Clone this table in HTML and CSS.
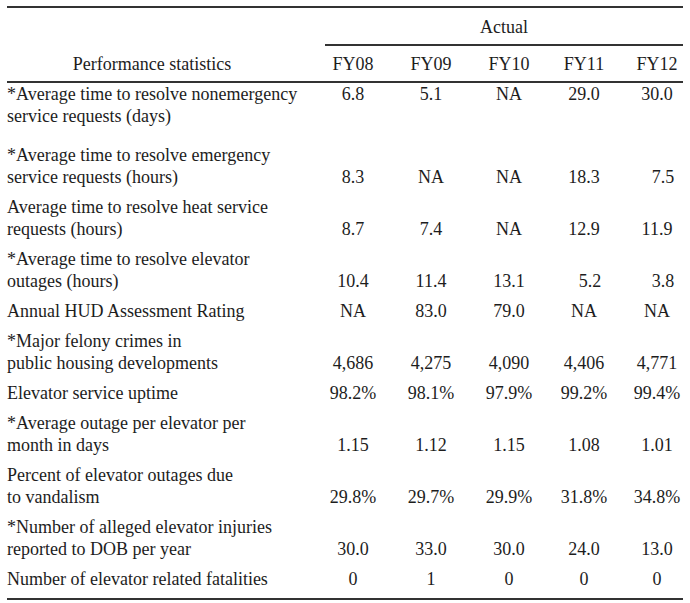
FILE: index.html
```html
<!DOCTYPE html>
<html lang="en">
<head>
<meta charset="utf-8">
<title>Performance statistics</title>
<link rel="stylesheet" href="styles.css">
</head>
<body>
<table class="stats">
  <colgroup>
    <col class="c-label">
    <col class="c1"><col class="c2"><col class="c3"><col class="c4"><col class="c5">
  </colgroup>
  <thead>
    <tr class="h-top">
      <th class="label-head" rowspan="2">Performance statistics</th>
      <th class="actual" colspan="5">Actual</th>
    </tr>
    <tr class="h-years">
      <th>FY08</th><th>FY09</th><th>FY10</th><th>FY11</th><th>FY12</th>
    </tr>
  </thead>
  <tbody>
    <tr class="first">
      <td class="label">*Average time to resolve nonemergency<br>service requests (days)</td>
      <td>6.8</td><td>5.1</td><td>NA</td><td>29.0</td><td>30.0</td>
    </tr>
    <tr>
      <td class="label">*Average time to resolve emergency<br>service requests (hours)</td>
      <td>8.3</td><td>NA</td><td>NA</td><td>18.3</td><td class="nudge">7.5</td>
    </tr>
    <tr>
      <td class="label">Average time to resolve heat service<br>requests (hours)</td>
      <td>8.7</td><td>7.4</td><td>NA</td><td>12.9</td><td>11.9</td>
    </tr>
    <tr>
      <td class="label">*Average time to resolve elevator<br>outages (hours)</td>
      <td>10.4</td><td>11.4</td><td>13.1</td><td class="nudge">5.2</td><td class="nudge">3.8</td>
    </tr>
    <tr>
      <td class="label">Annual HUD Assessment Rating</td>
      <td>NA</td><td>83.0</td><td>79.0</td><td>NA</td><td>NA</td>
    </tr>
    <tr>
      <td class="label">*Major felony crimes in<br>public housing developments</td>
      <td>4,686</td><td>4,275</td><td>4,090</td><td>4,406</td><td>4,771</td>
    </tr>
    <tr>
      <td class="label">Elevator service uptime</td>
      <td>98.2%</td><td>98.1%</td><td>97.9%</td><td>99.2%</td><td>99.4%</td>
    </tr>
    <tr>
      <td class="label">*Average outage per elevator per<br>month in days</td>
      <td>1.15</td><td>1.12</td><td>1.15</td><td>1.08</td><td>1.01</td>
    </tr>
    <tr>
      <td class="label">Percent of elevator outages due<br>to vandalism</td>
      <td>29.8%</td><td>29.7%</td><td>29.9%</td><td>31.8%</td><td>34.8%</td>
    </tr>
    <tr>
      <td class="label">*Number of alleged elevator injuries<br>reported to DOB per year</td>
      <td>30.0</td><td>33.0</td><td>30.0</td><td>24.0</td><td>13.0</td>
    </tr>
    <tr class="last">
      <td class="label">Number of elevator related fatalities</td>
      <td>0</td><td>1</td><td>0</td><td>0</td><td>0</td>
    </tr>
  </tbody>
</table>
</body>
</html>
```

FILE: styles.css
```css
html, body {
  margin: 0;
  padding: 0;
  background: #ffffff;
}

body {
  font-family: "Liberation Serif", "Times New Roman", serif;
  font-size: 18px;
  color: #1d1d1d;
  padding: 6px 0 0 7px;
}

.stats {
  border-collapse: collapse;
  table-layout: fixed;
  width: 676px;
  line-height: 22px;
}

.c-label { width: 318px; }
.c1 { width: 56px; }
.c2 { width: 100px; }
.c3 { width: 56px; }
.c4 { width: 94px; }
.c5 { width: 52px; }

.stats th {
  font-weight: normal;
  padding: 0;
  text-align: center;
  white-space: nowrap;
}

.h-top th {
  border-top: 2px solid #333333;
}

.label-head {
  vertical-align: bottom;
  padding-right: 28px !important;
  padding-bottom: 6px !important;
  border-bottom: 2px solid #333333;
}

.actual {
  height: 35px;
  vertical-align: middle;
  border-bottom: 2px solid #333333;
  padding-top: 1px !important;
}

.h-years th {
  height: 35px;
  vertical-align: middle;
  border-bottom: 2px solid #333333;
}

.stats td {
  padding: 0 0 8px 0;
  text-align: center;
  vertical-align: bottom;
  white-space: nowrap;
}

.stats td.label {
  text-align: left;
}

.stats tr.first td {
  vertical-align: top;
  padding-top: 0;
  padding-bottom: 17px;
}

.stats td.nudge {
  padding-left: 12px;
}

.stats tr.last td {
  border-bottom: 2px solid #333333;
}
```
